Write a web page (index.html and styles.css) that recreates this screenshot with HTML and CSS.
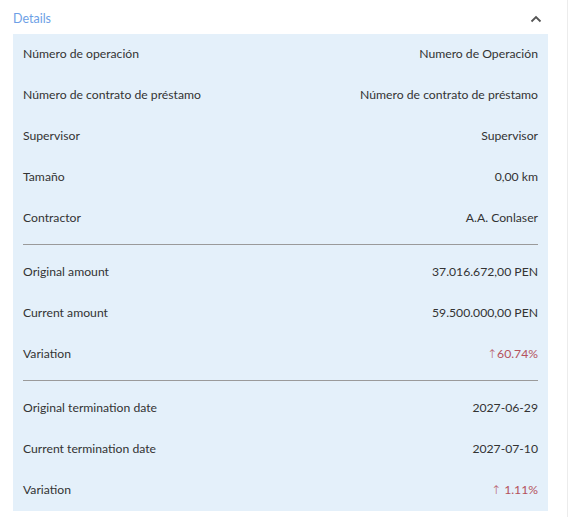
FILE: index.html
```html
<!DOCTYPE html>
<html lang="es">
<head>
<meta charset="utf-8">
<link rel="stylesheet" href="styles.css">
</head>
<body>
<div class="page">
  <div class="header">
    <span class="title">Details</span>
    <svg class="chev" width="12" height="8" viewBox="0 0 12 8"><path d="M1.5 6.5 L6 2 L10.5 6.5" fill="none" stroke="#555" stroke-width="1.8"/></svg>
  </div>
  <div class="panel">
    <div class="row"><span>Número de operación</span><span>Numero de Operación</span></div>
    <div class="row"><span>Número de contrato de préstamo</span><span>Número de contrato de préstamo</span></div>
    <div class="row"><span>Supervisor</span><span>Supervisor</span></div>
    <div class="row"><span>Tamaño</span><span>0,00 km</span></div>
    <div class="row"><span>Contractor</span><span>A.A. Conlaser</span></div>
    <hr class="div">
    <div class="row"><span>Original amount</span><span>37.016.672,00 PEN</span></div>
    <div class="row"><span>Current amount</span><span>59.500.000,00 PEN</span></div>
    <div class="row"><span>Variation</span><span class="up"><span class="arrow">↑</span>60.74%</span></div>
    <hr class="div">
    <div class="row"><span>Original termination date</span><span>2027-06-29</span></div>
    <div class="row"><span>Current termination date</span><span>2027-07-10</span></div>
    <div class="row"><span>Variation</span><span class="up"><span class="arrow">↑</span> 1.11%</span></div>
  </div>
</div>
</body>
</html>
```
FILE: styles.css
```css
html, body { margin: 0; padding: 0; background: #fff; }
body { font-family: "Lato", "Noto Sans", sans-serif; color: #333; font-size: 12.2px; }
.page { width: 568px; border-right: 1px solid #ececec; min-height: 517px; box-sizing: border-box; padding-left: 13px; }
.header { width: 535px; height: 34px; display: flex; align-items: center; justify-content: space-between; padding-top: 3px; box-sizing: border-box; }
.title { color: #6d9fe6; font-size: 12.5px; }
.chev { margin-right: 6px; }
.panel { width: 535px; background: #e4f0fa; padding: 0 10px; box-sizing: border-box; }
.row { height: 41px; display: flex; align-items: center; justify-content: space-between; padding-bottom: 2px; box-sizing: border-box; }
.div { border: 0; border-top: 1px solid #9a9a9a; margin: 5px 0 7px; height: 0; }
.up { color: #b5525c; }
.arrow { font-family: "DejaVu Sans", sans-serif; font-size: 12px; font-weight: 300; }
```
